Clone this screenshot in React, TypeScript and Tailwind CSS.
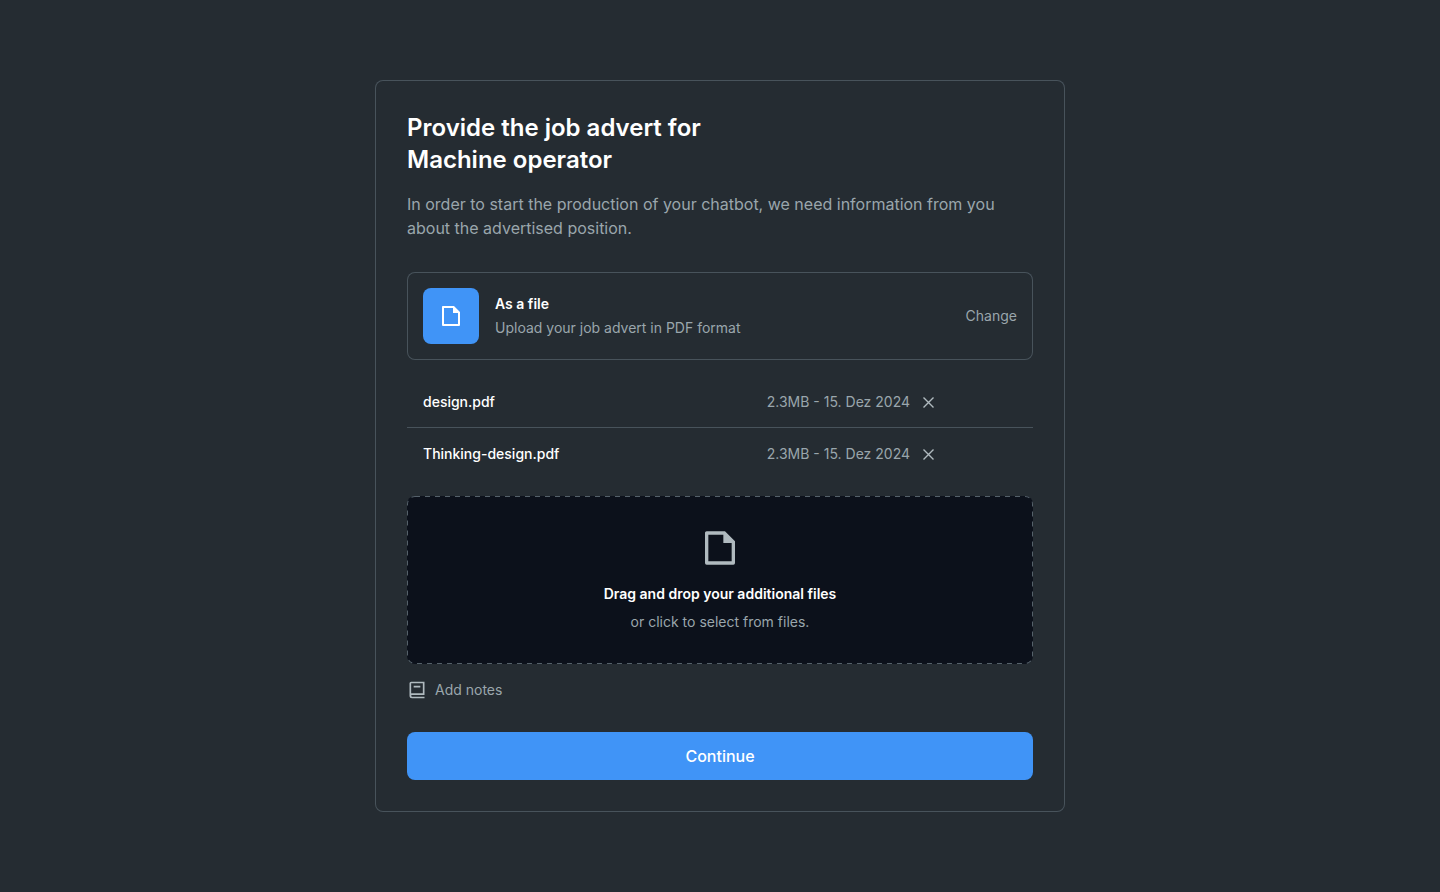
import React, { useState } from "react";

const files = [
  { name: "design.pdf", meta: "2.3MB - 15. Dez 2024" },
  { name: "Thinking-design.pdf", meta: "2.3MB - 15. Dez 2024" },
];

function FileIcon({ className }: { className: string }) {
  return (
    <svg viewBox="0 0 24 24" fill="currentColor" aria-hidden="true" className={className}>
      <path d="M21 8v12.993A1 1 0 0 1 20.007 22H3.993A.993.993 0 0 1 3 21.008V2.992C3 2.455 3.449 2 4.002 2h10.995L21 8zm-2 1h-5V4H5v16h14V9z" />
    </svg>
  );
}

function CloseIcon() {
  return (
    <svg
      viewBox="0 0 20 20"
      fill="none"
      stroke="currentColor"
      strokeWidth="1.4"
      aria-hidden="true"
      className="size-5"
    >
      <path d="M5.5 5.5l10 10M15.5 5.5l-10 10" />
    </svg>
  );
}

function BookIcon() {
  return (
    <svg
      viewBox="0 0 24 24"
      fill="currentColor"
      aria-hidden="true"
      className="size-5 text-[#b0babf]"
    >
      <path d="M21 18H6a1 1 0 0 0 0 2h15v2H6a3 3 0 0 1-3-3V4a2 2 0 0 1 2-2h16v16zM5 16.05c.162-.033.329-.05.5-.05H19V4H5v12.05zM16 9H8V7h8v2z" />
    </svg>
  );
}

export default function App() {
  const [items, setItems] = useState(files);

  return (
    <main className="flex min-h-screen items-center justify-center bg-[#252c32] py-20 font-['Inter',sans-serif] text-sm leading-6 text-[#b0babf]">
      <section className="w-full max-w-[690px] rounded-lg p-8 ring-1 ring-[#48535b] ring-inset">
        <h1 className="text-2xl leading-8 font-semibold text-white">
          Provide the job advert for
          <br />
          Machine operator
        </h1>
        <p className="mt-4 text-base leading-6 text-[#9aa6ac]">
          In order to start the production of your chatbot, we need information from you about the
          advertised position.
        </p>

        <div className="mt-8 flex items-center gap-4 rounded-lg p-4 ring-1 ring-[#48535b] ring-inset">
          <div className="flex size-14 items-center justify-center rounded-lg bg-[#4094f7] text-white">
            <FileIcon className="size-6" />
          </div>
          <div className="flex-1">
            <h2 className="font-semibold text-white">As a file</h2>
            <p className="text-[#9aa6ac]">Upload your job advert in PDF format</p>
          </div>
          <button type="button" className="text-[#9aa6ac]">
            Change
          </button>
        </div>

        <ul className="mt-4 divide-y divide-[#48535b]">
          {items.map((file) => (
            <li key={file.name} className="flex h-[52px] items-center pr-[95px] pl-4">
              <span className="flex-1 font-medium text-white">{file.name}</span>
              <span className="text-[#9aa6ac]">{file.meta}</span>
              <button
                type="button"
                aria-label={`Remove ${file.name}`}
                className="ml-2"
                onClick={() => setItems(items.filter((item) => item !== file))}
              >
                <CloseIcon />
              </button>
            </li>
          ))}
        </ul>

        <label className="relative mt-4 flex cursor-pointer flex-col items-center overflow-hidden rounded-lg bg-[#0c111b] pt-8 pb-[30px]">
          <svg className="absolute inset-0 size-full" aria-hidden="true">
            <rect
              width="100%"
              height="100%"
              rx="8"
              fill="none"
              stroke="#55616a"
              strokeWidth="2"
              strokeDasharray="5 5"
            />
          </svg>
          <FileIcon className="size-10" />
          <span className="mt-[14px] font-semibold text-white">
            Drag and drop your additional files
          </span>
          <span className="mt-1 text-[#9aa6ac]">or click to select from files.</span>
          <input type="file" multiple accept="application/pdf" className="sr-only" />
        </label>

        <button type="button" className="mt-4 flex items-center gap-2 leading-5 text-[#9aa6ac]">
          <BookIcon />
          Add notes
        </button>

        <button
          type="button"
          className="mt-8 h-12 w-full rounded-lg bg-[#4094f7] text-base font-medium text-white"
        >
          Continue
        </button>
      </section>
    </main>
  );
}
